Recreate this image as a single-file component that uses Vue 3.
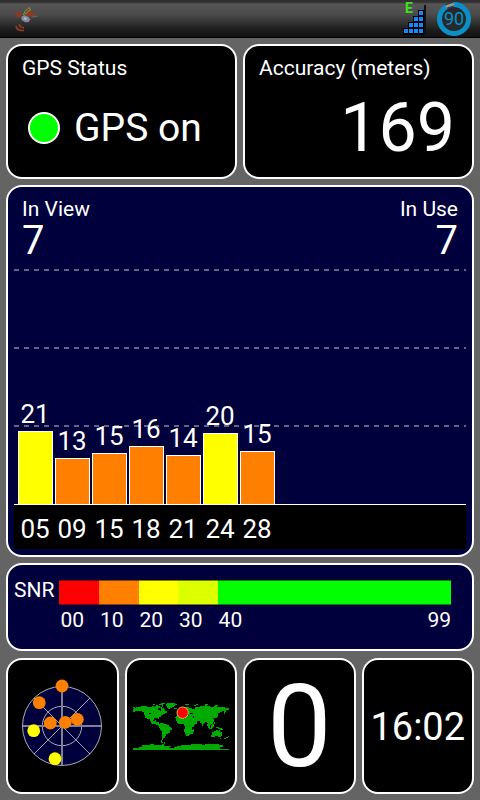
<script setup>
const satellites = [
  { id: '05', snr: 21, height: 73, strong: true },
  { id: '09', snr: 13, height: 46 },
  { id: '15', snr: 15, height: 51 },
  { id: '18', snr: 16, height: 58 },
  { id: '21', snr: 14, height: 49 },
  { id: '24', snr: 20, height: 71, strong: true },
  { id: '28', snr: 15, height: 53 },
]

const skyDots = [
  { x: 0, y: -40 },
  { x: -22.7, y: -23.3 },
  { x: -11.7, y: -3 },
  { x: 15.3, y: -6.7 },
  { x: 3.3, y: -3.7 },
  { x: -28.3, y: 4.7, strong: true },
  { x: -7, y: 32.7, strong: true },
]

const signalCells = []
for (let col = 0; col < 4; col++) {
  for (let row = 0; row <= col; row++) {
    signalCells.push({ x: 2 + col * 5, y: 29 - row * 6 })
  }
}

const scale = [
  { label: '00', tone: 'red' },
  { label: '10', tone: 'orange' },
  { label: '20', tone: 'yellow' },
  { label: '30', tone: 'lime' },
  { label: '40', tone: 'green', end: '99' },
]
</script>

<template>
  <div class="screen">
    <header class="statusbar">
      <svg class="sat" viewBox="0 0 120 114" aria-hidden="true">
        <path d="M45 37h16l4 2-1 7-6 6h-8l-1-6-5-4z" fill="#8e3a22" />
        <path d="M78 37l6-9 9 4 3 6 11 3-3 7-8 5-8-6-10 3z" fill="#8e3a22" />
        <path d="M70 45l5-11 9-9 5-2 2 7-6 3-7 9" fill="none" stroke="#a08a3c" stroke-width="3" />
        <path d="M72 47l6-8M88 24l3 7" stroke="#4f8a4a" stroke-width="3" />
        <path d="M64 50l10-4 12 5 5 8-6 8-11-1-9-6z" fill="#85889c" />
        <path d="M70 54l7-2 4 5-6 3z" fill="#b9bbca" />
        <path d="M97 51l17-3" stroke="#777" stroke-width="2" />
        <path d="M48 78c2 10 11 15 24 13M58 72c0 7 5 11 14 11" fill="none" stroke="#8e3a22" stroke-width="5" />
      </svg>
      <div class="indicators">
        <svg class="signal" viewBox="0 0 26 38" role="img" aria-label="Signal">
          <path d="M22 5h2v30h-2z" fill="#111" />
          <g v-for="cell in signalCells" :key="cell.x + '-' + cell.y">
            <rect :x="cell.x - 1" :y="cell.y - 1" width="6" height="7" fill="#000" />
            <rect :x="cell.x" :y="cell.y" width="4" height="4" fill="#1688ff" />
          </g>
          <text x="3" y="13" class="network">E</text>
        </svg>
        <svg class="battery" viewBox="0 0 36 38" role="img" aria-label="Battery">
          <circle cx="18" cy="19" r="14.500" fill="#26292b" stroke="#0b8fc6" stroke-width="5" />
          <path d="M10.500 6.600A14.500 14.500 0 0 1 17.500 4.500" fill="none" stroke="#333" stroke-width="5.500" />
          <path d="M10 6.500L18 4" stroke="#999" stroke-width="2.500" />
          <text x="18" y="25" text-anchor="middle" class="charge">90</text>
        </svg>
      </div>
    </header>

    <main class="board">
      <div class="pair">
        <section class="card status">
          <h2 class="label">GPS Status</h2>
          <p class="state"><span class="lamp"></span>GPS on</p>
        </section>
        <section class="card status">
          <h2 class="label">Accuracy (meters)</h2>
          <p class="accuracy">169</p>
        </section>
      </div>

      <section class="card navy chart">
        <div class="plot">
          <div class="counts">
            <div>
              <h2 class="label">In View</h2>
              <p class="count">7</p>
            </div>
            <div class="right">
              <h2 class="label">In Use</h2>
              <p class="count">7</p>
            </div>
          </div>
          <div class="bars">
            <div v-for="s in satellites" :key="s.id" class="column">
              <span>{{ s.snr }}</span>
              <div class="bar" :class="{ strong: s.strong }" :style="{ height: s.height + 'px' }"></div>
            </div>
          </div>
        </div>
        <div class="ids">
          <span v-for="s in satellites" :key="s.id">{{ s.id }}</span>
        </div>
      </section>

      <section class="card navy snr">
        <h2 class="label">SNR</h2>
        <div class="scale">
          <div v-for="step in scale" :key="step.label">
            <div class="swatch" :class="step.tone"></div>
            <div class="marks">
              <span>{{ step.label }}</span>
              <span v-if="step.end">{{ step.end }}</span>
            </div>
          </div>
        </div>
      </section>

      <div class="tiles">
        <section class="card tile">
          <svg class="sky" viewBox="-48 -48 96 96" role="img" aria-label="Sky view">
            <circle r="39.500" fill="#00003c" stroke="#aaaab4" />
            <circle r="19.700" fill="none" stroke="#aaaab4" />
            <path d="M-39 0H39M0-39V39" stroke="#808090" stroke-width="2" />
            <path d="M-28-28L28 28M-28 28L28-28" stroke="#c8c8d0" stroke-width=".8" />
            <circle
              v-for="(dot, i) in skyDots"
              :key="i"
              :cx="dot.x"
              :cy="dot.y"
              r="6.400"
              :fill="dot.strong ? '#ffff00' : '#ff8000'"
            />
          </svg>
        </section>
        <section class="card tile">
          <svg class="world" viewBox="6 0 288 156" role="img" aria-label="World map">
            <g fill="#00aa00" shape-rendering="crispEdges">
              <path d="M6 21h5v3h-5zM18 21h12v-3h18v3h15v-3h6v3h9v-3h9v6h-6v6h6v3h3v-9h6v3h6v6h6v6h-6v3h-6v3h-6v6h-6v6h-3v-3h-12v6h-3v3h6v-3h3v6h9v9h6v3h-9v-3h-6v-3h-12v-3h-3v-6h-3v-6h-9v-3h-6v-9h-3v-9h-6v-3h-21v3h-6v-6h-3z" />
              <path d="M66 12h6v3h9v3h-6v-3h-9zM72 18h9v3h-9zM84 12h6v-3h12v3h-6v9h-3v-6h-9zM87 21h6v3h6v3h-9v-3h-3zM96 12h12v-3h24v3h6v3h-6v3h-3v3h-6v3h-6v3h-6v-3h-3v-6h-3v-6h-6zM129 24h8v3h-8z" />
              <path d="M87 69h12v3h9v3h6v6h6v3h3v6h-6v9h-6v3h-6v6h-3v6h-6v6h-3v6h3v3h-6v-9h3v-27h-3v-3h-3v-6h-3v-12h3z" />
              <path d="M138 51h6v3h15v3h21v3h3v6h3v6h6v3h-3v6h-6v15h-3v6h-3v3h-3v3h-9v-6h-3v-6h-3v-9h3v-9h-3v-6h-18v-3h-3v-6h-3v-9h3zM186 87h3v9h-3v6h-6v-6h3v-6h3z" />
              <path d="M138 45h6v-9h6v-9h9v-6h15v3h9v3h9v-6h15v-3h15v-3h6v3h9v3h12v-3h9v3h24v3h15v-3h12v3h-6v3h-9v3h-9v6h-3v6h-3v-9h-6v3h-6v3h-6v3h-3v6h-3v6h-9v3h3v6h-3v9h-6v3h-3v6h-3v-6h-3v-6h-3v-3h-6v3h-3v3h-3v6h-3v-9h-6v-6h-9v9h-6v3h-6v-3h-3v-6h-6v-6h-9v-3h-6v-3h-6v-3h-9v3h-18z" />
              <path d="M162 12h12v3h-12zM189 15h6v-3h6v3h-6v3h-6zM222 12h9v3h-9zM252 15h9v3h-9zM252 51h3v-3h3v-6h3v9h-3v3h-6zM246 63h3v3h-3zM228 72h3v3h3v6h3v3h6v3h-9v-3h-3v-6h-3zM240 75h3v-3h6v9h-3v3h-6zM249 66h3v6h-3zM255 81h9v3h9v3h3v3h-9v-3h-6v-3h-6z" />
              <path d="M243 96h6v-3h6v-3h6v3h3v-3h3v6h6v12h-3v3h-9v-3h-9v3h-12v-6h3zM267 114h3v3h-3zM291 108h3v3h-3v3h-6v3h-6v-3h6v-3h6z" />
              <path d="M6 144h18v-3h9v-6h24v-3h12v3h24v-3h6v-6h3v6h-3v6h21v3h-6v3h15v-3h9v-3h12v-3h30v-3h33v3h9v-3h42v3h12v6h-9v6h27v3h-288z" />
            </g>
            <path d="M168 40h3v3h3v3h-6zM177 39h9v3h-9zM186 48h3v6h-3zM48 42h6v-3h6v3z" fill="#000" />
            <circle cx="155" cy="38" r="17" fill="#ff0000" stroke="#f5b82e" stroke-width="3" />
          </svg>
        </section>
        <section class="card tile speed">0</section>
        <section class="card tile clock">16:02</section>
      </div>
    </main>
  </div>
</template>

<style>
body {
  background: #646464;
}
</style>

<style scoped>
.screen {
  display: flex;
  flex-direction: column;
  min-height: 100vh;
  background: #646464;
  color: #fff;
  font-family: Roboto, "Liberation Sans", sans-serif;
}

.screen h2,
.screen p {
  margin: 0;
  font-weight: 400;
}

.statusbar {
  display: flex;
  justify-content: space-between;
  height: 38px;
  box-sizing: border-box;
  padding-right: 8px;
  border-bottom: 1px solid #000;
  background: linear-gradient(#303030 0, #303030 2px, #555 4px, #4c4c4c 14px, #1c1c1c 30px, #121212);
}

.sat {
  width: 40px;
  height: 38px;
}

.indicators {
  display: flex;
  gap: 8px;
}

.signal {
  width: 26px;
  height: 38px;
}

.battery {
  width: 36px;
  height: 38px;
}

.network {
  fill: #3ee01e;
  font-size: 14px;
  font-weight: 700;
}

.charge {
  fill: #0b8fc6;
  font-size: 18px;
}

.board {
  display: grid;
  flex: 1;
  grid-template-rows: 135px 1fr 88px 137px;
  gap: 6px;
  padding: 6px;
}

.card {
  box-sizing: border-box;
  border: 2px solid #fff;
  border-radius: 16px;
  background: #000;
}

.navy {
  background: #00003c;
}

.label {
  font-size: 21px;
  line-height: 24px;
}

.pair {
  display: grid;
  grid-template-columns: 1fr 1fr;
  gap: 6px;
}

.status {
  display: flex;
  flex-direction: column;
  padding: 10px 14px;
}

.state {
  display: flex;
  flex: 1;
  align-items: center;
  gap: 14px;
  padding: 8px 6px 0;
  font-size: 39px;
  line-height: 48px;
}

.lamp {
  width: 28px;
  height: 28px;
  border: 2px solid #fff;
  border-radius: 50%;
  background: #00ff00;
}

.accuracy {
  padding: 18px 3px 0;
  font-size: 68px;
  line-height: 60px;
  text-align: right;
}

.chart {
  display: flex;
  flex-direction: column;
  padding: 6px;
}

.plot {
  display: flex;
  flex: 1;
  flex-direction: column;
  justify-content: space-between;
  background-image:
    linear-gradient(90deg, #666682 50%, transparent 50%),
    linear-gradient(90deg, #666682 50%, transparent 50%),
    linear-gradient(90deg, #666682 50%, transparent 50%);
  background-position:
    0 calc(100% - 77px),
    0 calc(100% - 155px),
    0 calc(100% - 233px);
  background-size: 10px 2px;
  background-repeat: repeat-x;
}

.counts {
  display: flex;
  justify-content: space-between;
  padding: 4px 8px;
}

.right {
  text-align: right;
}

.count {
  font-size: 40px;
  line-height: 40px;
}

.bars,
.ids {
  display: flex;
  gap: 2px;
  padding-left: 4px;
  font-size: 26px;
  text-align: center;
}

.bars {
  align-items: flex-end;
}

.column {
  width: 34px;
  padding-right: 1px;
  line-height: 34px;
}

.bar {
  box-sizing: border-box;
  width: 35px;
  border: 1px solid #fff;
  border-bottom: 0;
  background: #ff8000;
}

.bar.strong {
  background: #ffff00;
}

.ids {
  padding-top: 4px;
  border-top: 1px solid #fff;
  background: #000;
  line-height: 40px;
}

.ids span {
  width: 34px;
  padding-right: 1px;
}

.snr {
  display: flex;
  gap: 5px;
  padding: 15px 21px 13px 6px;
}

.snr .label {
  margin-top: -2px;
}

.scale {
  display: grid;
  flex: 1;
  grid-template-columns: 10fr 10fr 10fr 10fr 59fr;
}

.swatch {
  height: 25px;
  box-sizing: border-box;
  border-top: 1px solid rgba(0, 0, 40, 0.5);
  border-bottom: 1px solid rgba(0, 0, 40, 0.5);
}

.red {
  background: #ff0000;
}

.orange {
  background: #ff8000;
}

.yellow {
  background: #ffff00;
}

.lime {
  background: #dcff00;
}

.green {
  background: #00ff00;
}

.marks {
  display: flex;
  justify-content: space-between;
  padding: 3px 0 0 1px;
  font-size: 21px;
  line-height: 24px;
}

.tiles {
  display: grid;
  grid-template-columns: repeat(4, 1fr);
  gap: 6px;
  padding-top: 1px;
}

.tile {
  display: flex;
  align-items: center;
  justify-content: center;
}

.sky {
  width: 96px;
  height: 96px;
}

.world {
  width: 96px;
  height: 52px;
}

.speed,
.clock {
  padding-top: 2px;
}

.speed {
  font-size: 115px;
  line-height: 120px;
}

.clock {
  font-size: 38px;
  line-height: 48px;
}
</style>
